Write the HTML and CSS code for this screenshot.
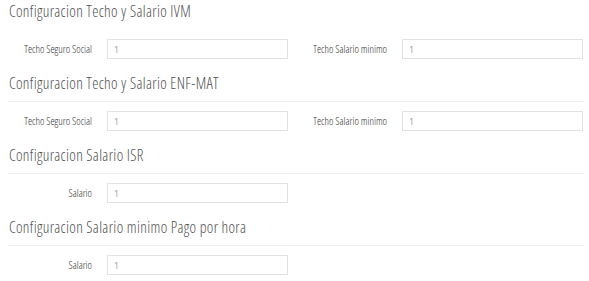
FILE: index.html
```html
<!DOCTYPE html>
<html lang="es">
<head>
    <meta charset="UTF-8" />
    <title>Configuracion</title>
    <link rel="stylesheet" href="styles.css">
</head>
<body>

    <div class="section">
        <h4 class="section-title">Configuracion Techo y Salario IVM</h4>
        <div class="divider hidden"></div>
        <div class="form-row">
            <label class="field-label">Techo Seguro Social</label>
            <input type="text" class="field-input" value="1" />
            <label class="field-label">Techo Salario minimo</label>
            <input type="text" class="field-input" value="1" />
        </div>
    </div>

    <div class="section">
        <h4 class="section-title">Configuracion Techo y Salario ENF-MAT</h4>
        <div class="divider"></div>
        <div class="form-row">
            <label class="field-label">Techo Seguro Social</label>
            <input type="text" class="field-input" value="1" />
            <label class="field-label">Techo Salario minimo</label>
            <input type="text" class="field-input" value="1" />
        </div>
    </div>

    <div class="section">
        <h4 class="section-title">Configuracion Salario ISR</h4>
        <div class="divider"></div>
        <div class="form-row">
            <label class="field-label">Salario</label>
            <input type="text" class="field-input" value="1" />
        </div>
    </div>

    <div class="section">
        <h4 class="section-title">Configuracion Salario minimo Pago por hora</h4>
        <div class="divider"></div>
        <div class="form-row">
            <label class="field-label">Salario</label>
            <input type="text" class="field-input" value="1" />
        </div>
    </div>

</body>
</html>
```

FILE: styles.css
```css
body {
    font-family: "Open Sans", "DejaVu Sans", sans-serif;
    background-color: #ffffff;
    color: #333;
    margin: 0;
    padding: 0 6px 0 8px;
}

.section {
    margin-bottom: 14px;
}

.section-title {
    font-size: 15.5px;
    font-weight: 300;
    font-stretch: 80%;
    letter-spacing: 0.35px;
    color: #505050;
    line-height: 20px;
    margin: 1px 0 8px 1px;
}

.divider {
    border-top: 1px solid #eeeeee;
    margin-bottom: 9px;
}

.divider.hidden {
    border-top-color: transparent;
}

.form-row {
    display: grid;
    grid-template-columns: 99px 181px 114px 181px;
    align-items: center;
}

.field-label {
    font-size: 10.5px;
    font-weight: 300;
    font-stretch: 80%;
    color: #333;
    text-align: right;
    padding-right: 15px;
}

.field-input {
    height: 20px;
    box-sizing: border-box;
    border: 1px solid #e2e2e2;
    border-radius: 0;
    padding: 0 6px;
    font-family: inherit;
    font-size: 9px;
    color: #999;
    background-color: #fff;
    margin: 0;
    width: 100%;
}
```
